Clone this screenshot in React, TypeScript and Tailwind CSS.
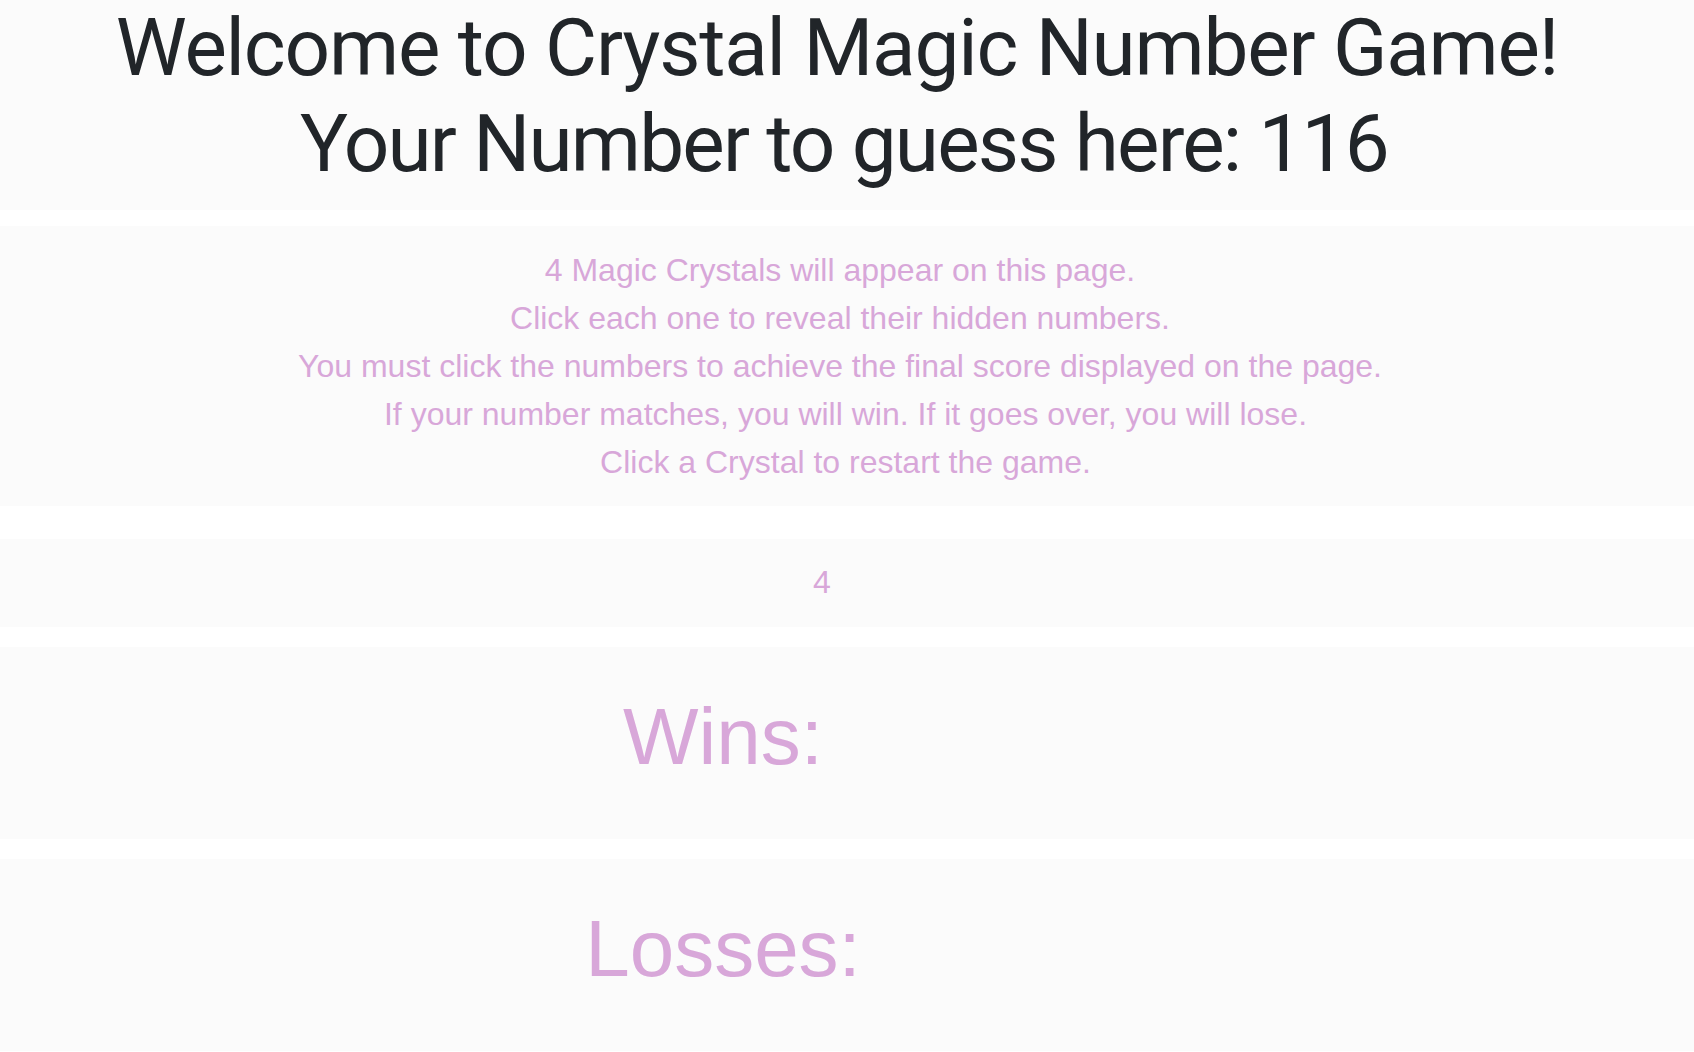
import React from "react";

export default function App() {
  return (
    <div className="min-h-screen bg-white">
      <div className="flex flex-col items-center bg-[#fbfbfb] pt-0 pb-[18px] pr-[12px] text-center font-['Roboto','Liberation_Sans',sans-serif] text-[80px] leading-[96px] text-[#212529]">
        <div className="pr-[8px] tracking-[-1.2px]">Welcome to Crystal Magic Number Game!</div>
        <div className="pl-[6px] tracking-[-1.8px]">Your Number to guess here: 116</div>
      </div>

      <div className="mt-4 flex flex-col items-center bg-[#fbfbfb] py-5 pr-[14px] text-center font-['Liberation_Sans',Arial,sans-serif] text-[32px] leading-[48px] text-[#d8a7d9]">
        <p>4 Magic Crystals will appear on this page.</p>
        <p>Click each one to reveal their hidden numbers.</p>
        <p>You must click the numbers to achieve the final score displayed on the page.</p>
        <p className="pl-[11px]">If your number matches, you will win. If it goes over, you will lose.</p>
        <p className="pl-[11px]">Click a Crystal to restart the game.</p>
      </div>

      <div className="mt-[33px] bg-[#fbfbfb] pt-[19px] pb-[21px] pr-[50px] text-center font-['Liberation_Sans',Arial,sans-serif] text-[32px] leading-[48px] text-[#d8a7d9]">
        4
      </div>

      <div className="mt-5 bg-[#fbfbfb] pt-[30px] pb-[42px] pr-[248px] text-center font-['Liberation_Sans',Arial,sans-serif] text-[80px] leading-[120px] text-[#d8a7d9]">
        Wins:
      </div>

      <div className="mt-5 bg-[#fbfbfb] pt-[30px] pb-[42px] pr-[248px] text-center font-['Liberation_Sans',Arial,sans-serif] text-[80px] leading-[120px] text-[#d8a7d9]">
        Losses:
      </div>
    </div>
  );
}
